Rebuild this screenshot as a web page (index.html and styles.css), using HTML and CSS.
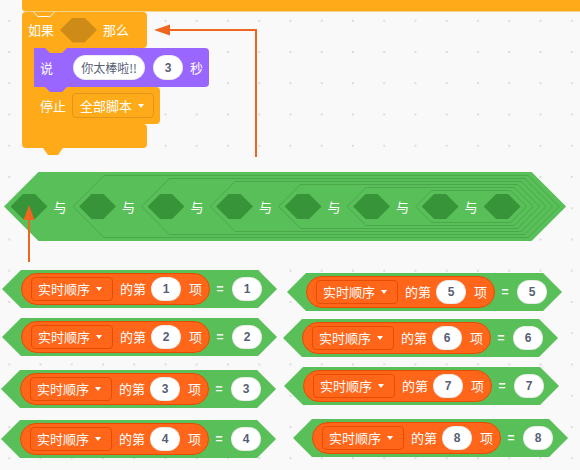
FILE: index.html
```html
<!DOCTYPE html>
<html lang="zh-CN">
<head>
<meta charset="utf-8">
<title>Scratch</title>
<link rel="stylesheet" href="styles.css">
</head>
<body>
<div class="canvas">
  <div class="top-bar"><span class="tab tab-ctrl bar-tab"></span></div>

  <div class="script script-if">
    <div class="if-head">
      <span class="label">如果</span>
      <span class="slot slot-ctrl"></span>
      <span class="label">那么</span>
      <span class="tab tab-ctrl head-tab"></span>
    </div>
    <div class="if-body">
      <div class="if-arm"></div>
      <div class="stack">
        <div class="blk blk-looks">
          <span class="label label-say">说</span>
          <span class="field field-text">你太棒啦!!</span>
          <span class="field field-num field-say">3</span>
          <span class="label">秒</span>
          <span class="tab tab-looks looks-tab"></span>
        </div>
        <div class="blk blk-stop">
          <span class="label">停止</span>
          <span class="dropdown dropdown-ctrl">全部脚本<i class="caret"></i></span>
        </div>
      </div>
    </div>
    <div class="if-foot"><span class="tab tab-ctrl foot-tab"></span></div>
  </div>

  <div class="script script-and">
    <div class="bool and lv0">
      <span class="slot slot-op"></span><span class="op">与</span>
      <div class="bool and lv1">
        <span class="slot slot-op"></span><span class="op">与</span>
        <div class="bool and lv2">
          <span class="slot slot-op"></span><span class="op">与</span>
          <div class="bool and lv3">
            <span class="slot slot-op"></span><span class="op">与</span>
            <div class="bool and lv4">
              <span class="slot slot-op"></span><span class="op">与</span>
              <div class="bool and lv5">
                <span class="slot slot-op"></span><span class="op">与</span>
                <div class="bool and lv6">
                  <span class="slot slot-op"></span><span class="op">与</span><span class="slot slot-op"></span>
                </div>
              </div>
            </div>
          </div>
        </div>
      </div>
    </div>
  </div>

  <div class="script cmp-1">
    <div class="bool cmp">
      <div class="reporter">
        <span class="dropdown dropdown-list">实时顺序<i class="caret"></i></span>
        <span class="label lbl-di">的第</span>
        <span class="field field-num field-sm fld-idx">1</span>
        <span class="label lbl-xiang">项</span>
      </div>
      <span class="eq">=</span>
      <span class="field field-num field-sm">1</span>
    </div>
  </div>

  <div class="script cmp-2">
    <div class="bool cmp">
      <div class="reporter">
        <span class="dropdown dropdown-list">实时顺序<i class="caret"></i></span>
        <span class="label lbl-di">的第</span>
        <span class="field field-num field-sm fld-idx">2</span>
        <span class="label lbl-xiang">项</span>
      </div>
      <span class="eq">=</span>
      <span class="field field-num field-sm">2</span>
    </div>
  </div>

  <div class="script cmp-3">
    <div class="bool cmp">
      <div class="reporter">
        <span class="dropdown dropdown-list">实时顺序<i class="caret"></i></span>
        <span class="label lbl-di">的第</span>
        <span class="field field-num field-sm fld-idx">3</span>
        <span class="label lbl-xiang">项</span>
      </div>
      <span class="eq">=</span>
      <span class="field field-num field-sm">3</span>
    </div>
  </div>

  <div class="script cmp-4">
    <div class="bool cmp">
      <div class="reporter">
        <span class="dropdown dropdown-list">实时顺序<i class="caret"></i></span>
        <span class="label lbl-di">的第</span>
        <span class="field field-num field-sm fld-idx">4</span>
        <span class="label lbl-xiang">项</span>
      </div>
      <span class="eq">=</span>
      <span class="field field-num field-sm">4</span>
    </div>
  </div>

  <div class="script cmp-5">
    <div class="bool cmp">
      <div class="reporter">
        <span class="dropdown dropdown-list">实时顺序<i class="caret"></i></span>
        <span class="label lbl-di">的第</span>
        <span class="field field-num field-sm fld-idx">5</span>
        <span class="label lbl-xiang">项</span>
      </div>
      <span class="eq">=</span>
      <span class="field field-num field-sm">5</span>
    </div>
  </div>

  <div class="script cmp-6">
    <div class="bool cmp">
      <div class="reporter">
        <span class="dropdown dropdown-list">实时顺序<i class="caret"></i></span>
        <span class="label lbl-di">的第</span>
        <span class="field field-num field-sm fld-idx">6</span>
        <span class="label lbl-xiang">项</span>
      </div>
      <span class="eq">=</span>
      <span class="field field-num field-sm">6</span>
    </div>
  </div>

  <div class="script cmp-7">
    <div class="bool cmp">
      <div class="reporter">
        <span class="dropdown dropdown-list">实时顺序<i class="caret"></i></span>
        <span class="label lbl-di">的第</span>
        <span class="field field-num field-sm fld-idx">7</span>
        <span class="label lbl-xiang">项</span>
      </div>
      <span class="eq">=</span>
      <span class="field field-num field-sm">7</span>
    </div>
  </div>

  <div class="script cmp-8">
    <div class="bool cmp">
      <div class="reporter">
        <span class="dropdown dropdown-list">实时顺序<i class="caret"></i></span>
        <span class="label lbl-di">的第</span>
        <span class="field field-num field-sm fld-idx">8</span>
        <span class="label lbl-xiang">项</span>
      </div>
      <span class="eq">=</span>
      <span class="field field-num field-sm">8</span>
    </div>
  </div>

  <svg class="arrows" width="580" height="470" viewBox="0 0 580 470" aria-hidden="true">
    <path d="M256 157 V30 H168" fill="none" stroke="#f0661f" stroke-width="2"/>
    <polygon points="154,30 170,24.5 170,35.5" fill="#f0661f"/>
    <path d="M29 262 V218" fill="none" stroke="#f0661f" stroke-width="2"/>
    <polygon points="29,205 23.5,220 34.5,220" fill="#f0661f"/>
  </svg>
</div>
</body>
</html>
```

FILE: styles.css
```css
* { box-sizing: border-box; }

html, body {
  margin: 0;
  padding: 0;
  background: #f9f9f9;
}

.canvas {
  position: relative;
  width: 580px;
  height: 470px;
  overflow: hidden;
  font-family: "Noto Sans CJK SC", "Liberation Sans", sans-serif;
  background-color: #f9f9f9;
  background-image: radial-gradient(circle, #dcdcdc 0.9px, rgba(249, 249, 249, 0) 1.5px);
  background-size: 31.25px 31.25px;
  background-position: -6.4px 5.1px;
}

/* ---------- generic pieces ---------- */
.script { position: absolute; }

.label {
  color: #fff;
  font-size: 13px;
  line-height: 16px;
  white-space: nowrap;
}

.tab {
  position: absolute;
  top: 100%;
  z-index: 3;
  clip-path: polygon(0 0, 100% 0, calc(100% - 5px) 100%, 5px 100%);
}
.tab-ctrl { background: #ffab19; }
.tab-looks { background: #9966ff; }

.bool, .slot {
  clip-path: polygon(0 50%, calc(var(--h) / 2) 0, calc(100% - var(--h) / 2) 0, 100% 50%, calc(100% - var(--h) / 2) 100%, calc(var(--h) / 2) 100%);
}

.slot {
  --h: 25px;
  display: block;
  flex: none;
  width: 37px;
  height: 25px;
}
.slot-ctrl { background: #cf8b17; }
.slot-op { background: #389438; }

.field {
  display: inline-flex;
  align-items: center;
  justify-content: center;
  flex: none;
  height: 25px;
  border-radius: 13px;
  background: #fff;
  color: #575e75;
  font-size: 12px;
  line-height: 14px;
  border: 1px solid rgba(0, 0, 0, 0.08);
}
.field-num {
  width: 30px;
  font-family: "Liberation Sans", Arial, sans-serif;
  font-weight: bold;
}
.field-sm { height: 24px; }
.field-text { width: 72px; }

.dropdown {
  display: inline-flex;
  align-items: center;
  flex: none;
  color: #fff;
  font-size: 13px;
  line-height: 16px;
  border-radius: 4px;
  white-space: nowrap;
}
.caret {
  display: block;
  width: 0;
  height: 0;
  margin-left: 6px;
  border-left: 3.5px solid transparent;
  border-right: 3.5px solid transparent;
  border-top: 4px solid #fff;
}

/* ---------- top bar (block above) ---------- */
.top-bar {
  position: absolute;
  left: 22px;
  top: 0;
  right: 0;
  height: 12px;
  background: #ffab19;
  border-bottom: 1px solid #f7d08a;
  border-bottom-left-radius: 4px;
}
.bar-tab {
  left: 12px;
  top: 12px;
  width: 20px;
  height: 4px;
  clip-path: polygon(0 0, 100% 0, calc(100% - 4px) 100%, 4px 100%);
}

/* ---------- if block ---------- */
.script-if { left: 22px; top: 12px; }

.if-head {
  position: relative;
  display: flex;
  align-items: center;
  gap: 6px;
  width: 125px;
  height: 36px;
  padding-left: 6px;
  background: #ffab19;
  border-radius: 4px 4px 4px 0;
}
.if-head::before {
  content: "";
  position: absolute;
  left: 11px;
  top: 0;
  width: 22px;
  height: 5px;
  background: #f9f9f9;
  clip-path: polygon(0 0, 100% 0, calc(100% - 5px) 100%, 5px 100%);
}
.head-tab { left: 23px; width: 22px; height: 5px; }

.if-body { display: flex; }
.if-arm { width: 12px; flex: none; background: #ffab19; }
.stack { display: flex; flex-direction: column; align-items: flex-start; }

.blk {
  position: relative;
  display: flex;
  align-items: center;
}
.blk-looks {
  height: 39px;
  padding: 0 6px;
  background: #9966ff;
  border-radius: 0 4px 4px 0;
}
.label-say { margin-right: 20px; }
.field-text { margin-right: 8px; }
.field-say { margin-right: 7px; }
.looks-tab { left: 11px; width: 22px; height: 5px; }

.blk-stop {
  height: 37px;
  padding: 0 6px;
  gap: 6px;
  background: #ffab19;
  border-radius: 0 4px 4px 0;
}
.dropdown-ctrl {
  height: 25px;
  padding: 0 9px 0 7px;
  background: #ffab19;
  border: 1px solid #e0961a;
}

.if-foot {
  position: relative;
  width: 125px;
  height: 24px;
  background: #ffab19;
  border-radius: 0 4px 4px 4px;
}
.foot-tab { left: 21px; width: 20px; height: 7px; }

/* ---------- nested "and" block ---------- */
.script-and { left: 4px; top: 172px; }

.bool {
  position: relative;
  display: flex;
  align-items: center;
  flex: none;
  height: var(--h);
}

.and {
  gap: 6px;
  padding: 0 6.5px 0 6.5px;
  background: #4aa84a;
}
.and::before {
  content: "";
  position: absolute;
  inset: 1px;
  background: #59c059;
  clip-path: polygon(0 50%, calc(var(--h) / 2 - 1px) 0, calc(100% - var(--h) / 2 + 1px) 0, 100% 50%, calc(100% - var(--h) / 2 + 1px) 100%, calc(var(--h) / 2 - 1px) 100%);
}
.and > * { position: relative; }

.lv0 { --h: 69px; background: #59c059; }
.lv1 { --h: 63px; }
.lv2 { --h: 57px; }
.lv3 { --h: 51px; }
.lv4 { --h: 45px; }
.lv5 { --h: 39px; }
.lv6 { --h: 33px; }

.op {
  color: #fff;
  font-size: 13px;
  line-height: 16px;
}

/* ---------- compare blocks ---------- */
.cmp {
  --h: 38px;
  padding: 0 15px 0 19px;
  background: #59c059;
}

.reporter {
  display: flex;
  align-items: center;
  flex: none;
  height: 32px;
  padding: 0 7px 0 9px;
  background: #ff661a;
  border: 1px solid #e64d00;
  border-radius: 16px;
}
.dropdown-list {
  height: 24px;
  padding: 0 10px 0 6px;
  background: #ff661a;
  border: 1px solid #e64d00;
}
.lbl-di { margin-left: 7px; }
.fld-idx { margin-left: 5px; }
.lbl-xiang { margin-left: 8px; }

.eq {
  width: 8px;
  margin: 0 8px 0 6px;
  color: #fff;
  font-family: "Liberation Sans", Arial, sans-serif;
  font-weight: bold;
  font-size: 12px;
  text-align: center;
}

.cmp-1 { left: 2px; top: 270px; }
.cmp-2 { left: 2px; top: 318px; }
.cmp-3 { left: 1px; top: 370px; }
.cmp-4 { left: 1px; top: 420px; }
.cmp-5 { left: 287px; top: 273px; }
.cmp-6 { left: 283px; top: 319px; }
.cmp-7 { left: 284px; top: 367px; }
.cmp-8 { left: 293px; top: 419px; }

/* ---------- annotation arrows ---------- */
.arrows {
  position: absolute;
  left: 0;
  top: 0;
  z-index: 10;
  pointer-events: none;
}
```
